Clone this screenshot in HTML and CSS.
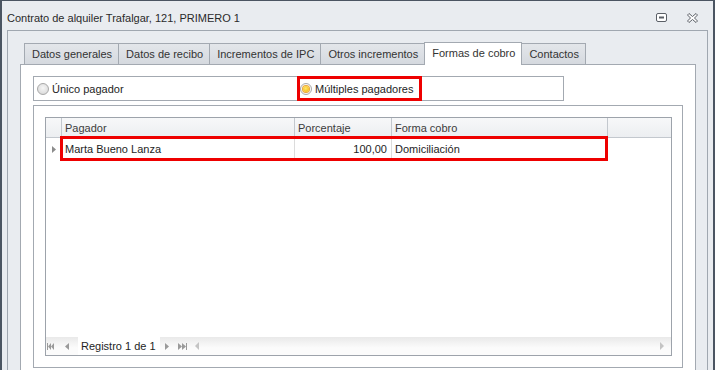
FILE: index.html
```html
<!DOCTYPE html>
<html lang="es">
<head>
    <meta charset="UTF-8">
    <title>Contrato de alquiler</title>
    <link rel="stylesheet" href="styles.css">
</head>
<body>
<div class="window">
    <div class="titlebar">
        <span class="title">Contrato de alquiler Trafalgar, 121, PRIMERO 1</span>
        <div class="controls">
            <svg width="11" height="9" viewBox="0 0 11 9"><rect x="0.5" y="0.5" width="10" height="8" rx="1.5" fill="#fff" stroke="#5a5f66"/><rect x="3" y="3.5" width="5" height="2" fill="#5a5f66"/></svg>
            <svg width="11" height="10" viewBox="0 0 11 10"><path d="M0.5,2 L2,0.5 L5.5,3.5 L9,0.5 L10.5,2 L7.5,5 L10.5,8 L9,9.5 L5.5,6.5 L2,9.5 L0.5,8 L3.5,5 Z" fill="#fff" stroke="#5a5f66" stroke-linejoin="round"/></svg>
        </div>
    </div>

    <div class="frame">
        <div class="tabs">
            <div class="tab">Datos generales</div>
            <div class="tab">Datos de recibo</div>
            <div class="tab">Incrementos de IPC</div>
            <div class="tab">Otros incrementos</div>
            <div class="tab active">Formas de cobro</div>
            <div class="tab">Contactos</div>
        </div>

        <div class="tab-page">
            <div class="radio-group">
                <label class="option"><span class="radio"></span>Único pagador</label>
                <label class="option highlight"><span class="radio checked"></span>Múltiples pagadores</label>
            </div>

            <div class="group-box">
                <div class="grid">
                    <div class="grid-head">
                        <div class="cell indicator"></div>
                        <div class="cell">Pagador</div>
                        <div class="cell">Porcentaje</div>
                        <div class="cell">Forma cobro</div>
                        <div class="cell last"></div>
                    </div>
                    <div class="grid-row">
                        <div class="cell indicator">
                            <svg width="4" height="7" viewBox="0 0 4 7"><polygon points="0,0 4,3.5 0,7" fill="#8c8c8c"/></svg>
                        </div>
                        <div class="cell">Marta Bueno Lanza</div>
                        <div class="cell num">100,00</div>
                        <div class="cell">Domiciliación</div>
                        <div class="cell last"></div>
                    </div>
                    <div class="grid-empty"></div>
                    <div class="navigator">
                        <svg class="nav-first" width="7" height="7" viewBox="0 0 7 7"><rect x="0" y="0" width="1" height="7" fill="#9a9a9a"/><polygon points="4,0 1,3.5 4,7" fill="#9a9a9a"/><polygon points="7,0 4,3.5 7,7" fill="#9a9a9a"/></svg>
                        <svg class="nav-prev" width="4" height="7" viewBox="0 0 4 7"><polygon points="4,0 0,3.5 4,7" fill="#9a9a9a"/></svg>
                        <span class="record">Registro 1 de 1</span>
                        <svg class="nav-next" width="4" height="7" viewBox="0 0 4 7"><polygon points="0,0 4,3.5 0,7" fill="#9a9a9a"/></svg>
                        <svg class="nav-last" width="9" height="7" viewBox="0 0 9 7"><polygon points="0,0 4,3.5 0,7" fill="#9a9a9a"/><polygon points="4,0 8,3.5 4,7" fill="#9a9a9a"/><rect x="8" y="0" width="1" height="7" fill="#9a9a9a"/></svg>
                        <svg class="scroll-left" width="4" height="8" viewBox="0 0 4 8"><polygon points="4,0 0,4 4,8" fill="#c4c4c4"/></svg>
                        <span class="spacer"></span>
                        <svg class="scroll-right" width="4" height="8" viewBox="0 0 4 8"><polygon points="0,0 4,4 0,8" fill="#c4c4c4"/></svg>
                    </div>
                    <div class="row-mark"></div>
                </div>
            </div>
        </div>
    </div>
</div>
</body>
</html>
```

FILE: styles.css
```css
body {
    margin: 0;
    font-family: 'Liberation Sans', Arial, sans-serif;
    font-size: 11px;
    color: #1e1e1e;
    background-color: #e9ecf0;
    overflow: hidden;
}

.window {
    height: 370px;
    box-sizing: border-box;
    border-top: 1px solid #4b5562;
    border-left: 2px solid #4b5562;
    border-right: 2px solid #4b5562;
    background-color: #e9ecf0;
    display: flex;
    flex-direction: column;
    overflow: hidden;
}

/* title bar */
.titlebar {
    height: 29px;
    box-sizing: border-box;
    padding: 4px 15px 0 5px;
    display: flex;
    align-items: center;
    flex-shrink: 0;
}

.title {
    color: #2a2a2a;
    flex: 1;
}

.controls {
    display: flex;
    align-items: center;
    gap: 20px;
}

.controls svg {
    display: block;
}

/* outer frame with the tabs */
.frame {
    flex: 1;
    margin: 0 5px;
    border: 1px solid #a0a7b0;
    border-bottom: none;
    padding: 11px 11px 0 12px;
    background-color: #e9ecf0;
}

.tabs {
    display: flex;
    align-items: flex-end;
    margin-left: 4px;
    position: relative;
    z-index: 1;
}

.tab {
    height: 21px;
    box-sizing: border-box;
    padding: 0 6px 0 7px;
    border: 1px solid #a3a9b1;
    border-bottom: none;
    margin-left: -1px;
    background: linear-gradient(#e3e6ea, #d5d9df);
    color: #333;
    display: flex;
    align-items: center;
    white-space: nowrap;
}

.tab:first-child {
    margin-left: 0;
}

.tab.active {
    height: 23px;
    margin-bottom: -1px;
    background: #fff;
    padding-bottom: 2px;
}

.tab-page {
    background-color: #fff;
    border: 1px solid #a3a9b1;
    border-bottom: none;
    padding: 11px 11px 0 12px;
    height: 400px;
}

/* payer type */
.radio-group {
    width: 531px;
    height: 25px;
    box-sizing: border-box;
    border: 1px solid #a3a9b1;
    display: grid;
    grid-template-columns: 263px 1fr;
}

.option {
    display: flex;
    align-items: center;
    padding-left: 3px;
    position: relative;
}

.option.highlight::after {
    content: "";
    position: absolute;
    top: -1px;
    left: 0;
    width: 125px;
    height: 25px;
    box-sizing: border-box;
    border: 3px solid #ee0000;
}

.radio {
    width: 12px;
    height: 12px;
    box-sizing: border-box;
    border-radius: 50%;
    border: 1px solid #a8a8a8;
    background: radial-gradient(circle at 50% 40%, #f6f6f6, #d4d4d4);
    margin-right: 3px;
    display: flex;
    align-items: center;
    justify-content: center;
}

.radio.checked {
    background: #fafafa;
}

.radio.checked::before {
    content: "";
    width: 6px;
    height: 6px;
    border-radius: 50%;
    background: radial-gradient(circle at 45% 40%, #ffe66a, #f3b000);
    box-shadow: 0 0 0 1px #e9a63a;
}

/* grid area */
.group-box {
    width: 650px;
    height: 263px;
    box-sizing: border-box;
    margin-top: 4px;
    border: 1px solid #a3a9b1;
    padding: 11px 10px 11px 11px;
}

.grid {
    height: 100%;
    box-sizing: border-box;
    border: 1px solid #9da3ab;
    display: flex;
    flex-direction: column;
    position: relative;
}

.grid-head,
.grid-row {
    display: grid;
    grid-template-columns: 16px 233px 97px 216px 1fr;
}

.grid-head {
    height: 20px;
    box-sizing: border-box;
    border-bottom: 1px solid #c3c8ce;
    background: linear-gradient(#f7f8f9, #eceef1);
    color: #3c3c3c;
}

.grid-head .cell {
    border-right: 1px solid #c3c8ce;
}

.grid-row {
    height: 22px;
}

.grid-row .cell {
    border-right: 1px solid #dcdcdc;
}

.cell {
    display: flex;
    align-items: center;
    padding-left: 3px;
    white-space: nowrap;
}

.cell.last {
    border-right: none !important;
}

.cell.indicator {
    padding-left: 0;
    justify-content: center;
}

.cell.num {
    justify-content: flex-end;
    padding: 0 4px 0 0;
}

.grid-empty {
    flex: 1;
}

.navigator {
    height: 18px;
    display: flex;
    align-items: center;
    background: linear-gradient(#e9e9e9, #fbfbfb 60%);
    padding-left: 1px;
}

.navigator svg {
    display: block;
    flex-shrink: 0;
}

.nav-prev { margin-left: 11px; }

.record {
    margin-left: 9px;
    width: 82px;
    height: 100%;
    box-sizing: border-box;
    padding-left: 3px;
    background-color: #fff;
    display: flex;
    align-items: center;
    color: #1e1e1e;
}

.nav-next { margin-left: 5px; }
.nav-last { margin-left: 9px; }
.scroll-left { margin-left: 8px; }
.spacer { flex: 1; }
.scroll-right { margin-right: 7px; }

.row-mark {
    position: absolute;
    left: 14px;
    top: 18px;
    width: 548px;
    height: 25px;
    box-sizing: border-box;
    border: 3px solid #ee0000;
}
```
